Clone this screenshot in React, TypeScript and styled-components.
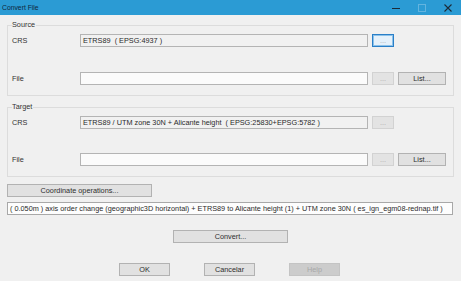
import styled, { createGlobalStyle, css } from "styled-components";

const GlobalStyle = createGlobalStyle`
  body {
    margin: 0;
    background: #f0f0f0;
    font-family: "Liberation Sans", Arial, sans-serif;
    color: #2e2e2e;
  }
`;

type Variant = "normal" | "focused" | "disabled";

export default function App() {
  return (
    <Window>
      <GlobalStyle />
      <TitleBar>
        <TitleText>Convert File</TitleText>
        <WindowControls>
          <ControlButton>
            <svg width="8" height="8" viewBox="0 0 8 8">
              <line x1="0" y1="4.5" x2="8" y2="4.5" stroke="#1b2b38" strokeWidth="1" />
            </svg>
          </ControlButton>
          <ControlButton>
            <svg width="8" height="8" viewBox="0 0 8 8">
              <rect x="0.5" y="0.5" width="7" height="7" fill="none" stroke="#63b4df" strokeWidth="1" />
            </svg>
          </ControlButton>
          <ControlButton>
            <svg width="8" height="8" viewBox="0 0 8 8">
              <path d="M0.5 0.5 L7.5 7.5 M7.5 0.5 L0.5 7.5" stroke="#1b2b38" strokeWidth="1.1" />
            </svg>
          </ControlButton>
        </WindowControls>
      </TitleBar>

      <Body>
        <GroupBox>
          <Legend>Source</Legend>
          <Rows $gap={25}>
            <Row>
              <Label>CRS</Label>
              <Field $readOnly>ETRS89&nbsp;&nbsp;( EPSG:4937 )</Field>
              <SmallButton $variant="focused">...</SmallButton>
            </Row>
            <Row>
              <Label>File</Label>
              <Field />
              <SmallButton $variant="disabled" disabled>...</SmallButton>
              <ListButton>List...</ListButton>
            </Row>
          </Rows>
        </GroupBox>

        <GroupBox $spaced>
          <Legend>Target</Legend>
          <Rows $gap={24}>
            <Row>
              <Label>CRS</Label>
              <Field $readOnly>
                ETRS89 / UTM zone 30N + Alicante height&nbsp;&nbsp;( EPSG:25830+EPSG:5782 )
              </Field>
              <SmallButton $variant="disabled" disabled>...</SmallButton>
            </Row>
            <Row>
              <Label>File</Label>
              <Field />
              <SmallButton $variant="disabled" disabled>...</SmallButton>
              <ListButton>List...</ListButton>
            </Row>
          </Rows>
        </GroupBox>

        <OperationsButton>Coordinate operations...</OperationsButton>
        <InfoField>
          ( 0.050m ) axis order change (geographic3D horizontal) + ETRS89 to Alicante height (1) + UTM
          zone 30N ( es_ign_egm08-rednap.tif )
        </InfoField>
        <ConvertButton>Convert...</ConvertButton>

        <Footer>
          <DialogButton>OK</DialogButton>
          <DialogButton>Cancelar</DialogButton>
          <DialogButton $variant="disabled" disabled>Help</DialogButton>
        </Footer>
      </Body>
    </Window>
  );
}

const Window = styled.div`
  width: 461px;
  height: 281px;
  display: flex;
  flex-direction: column;
  background: #f0f0f0;
  overflow: hidden;
  font-size: 7.3px;
`;

const TitleBar = styled.div`
  height: 15px;
  flex-shrink: 0;
  display: flex;
  align-items: center;
  padding-left: 2px;
  background: #2b9bd4;
`;

const TitleText = styled.span`
  font-size: 6.8px;
  color: #10283c;
`;

const WindowControls = styled.div`
  margin-left: auto;
  display: flex;
`;

const ControlButton = styled.div`
  width: 26px;
  height: 15px;
  display: flex;
  align-items: center;
  justify-content: center;
`;

const Body = styled.div`
  display: flex;
  flex-direction: column;
  padding: 5px 7px 0 7px;
`;

const GroupBox = styled.fieldset<{ $spaced?: boolean }>`
  margin: ${(p) => (p.$spaced ? "6px" : "0")} 0 0 0;
  padding: 4px 7px 10px 4px;
  border: 1px solid #dcdcdc;
  min-width: 0;
`;

const Legend = styled.legend`
  padding: 0 1px 0 0;
  line-height: 10px;
  font-size: 7.3px;
  color: #333;
`;

const Rows = styled.div<{ $gap: number }>`
  display: flex;
  flex-direction: column;
  gap: ${(p) => p.$gap}px;
`;

const Row = styled.div`
  display: flex;
  align-items: center;
  height: 13px;
`;

const Label = styled.span`
  width: 68px;
  flex-shrink: 0;
  color: #333;
`;

const Field = styled.div<{ $readOnly?: boolean }>`
  box-sizing: border-box;
  width: 288px;
  height: 13px;
  padding: 0 2px;
  display: flex;
  align-items: center;
  white-space: nowrap;
  overflow: hidden;
  border: 1px solid #b4b4b4;
  background: ${(p) => (p.$readOnly ? "#f1f1f1" : "#fbfbfb")};
  color: #2a2a2a;
`;

const buttonLook = css<{ $variant?: Variant }>`
  box-sizing: border-box;
  height: 13px;
  padding: 0;
  font-family: inherit;
  font-size: 7.3px;
  line-height: 1;
  color: #2e2e2e;
  background: #e1e1e1;
  border: 1px solid #b2b2b2;
  border-radius: 0;
  ${(p) =>
    p.$variant === "focused" &&
    css`
      background: #e5f1fb;
      border: 1px solid #2a7fc8;
      box-shadow: inset 0 0 0 1px #8cc2ea;
      color: #a0a8b0;
    `}
  ${(p) =>
    p.$variant === "disabled" &&
    css`
      background: #e3e3e3;
      border: 1px solid #d2d2d2;
      color: #ababab;
    `}
`;

const SmallButton = styled.button<{ $variant?: Variant }>`
  ${buttonLook};
  width: 22px;
  margin-left: 4px;
`;

const ListButton = styled.button<{ $variant?: Variant }>`
  ${buttonLook};
  width: 48px;
  margin-left: 4px;
`;

const OperationsButton = styled.button<{ $variant?: Variant }>`
  ${buttonLook};
  width: 145px;
  margin-top: 7px;
`;

const InfoField = styled.div`
  box-sizing: border-box;
  width: 446px;
  height: 13px;
  margin-top: 5px;
  padding: 0 2px;
  display: flex;
  align-items: center;
  white-space: nowrap;
  overflow: hidden;
  border: 1px solid #a8a8a8;
  background: #fdfdfd;
  color: #2a2a2a;
`;

const ConvertButton = styled.button<{ $variant?: Variant }>`
  ${buttonLook};
  width: 115px;
  margin: 15px auto 0;
`;

const Footer = styled.div`
  display: flex;
  justify-content: center;
  gap: 34px;
  margin-top: 20px;
  padding-right: 2px;
`;

const DialogButton = styled.button<{ $variant?: Variant }>`
  ${buttonLook};
  width: 51px;
  ${(p) =>
    p.$variant === "disabled" &&
    css`
      background: #cccccc;
      border-color: #c4c4c4;
      color: #a8a8a8;
    `}
`;
